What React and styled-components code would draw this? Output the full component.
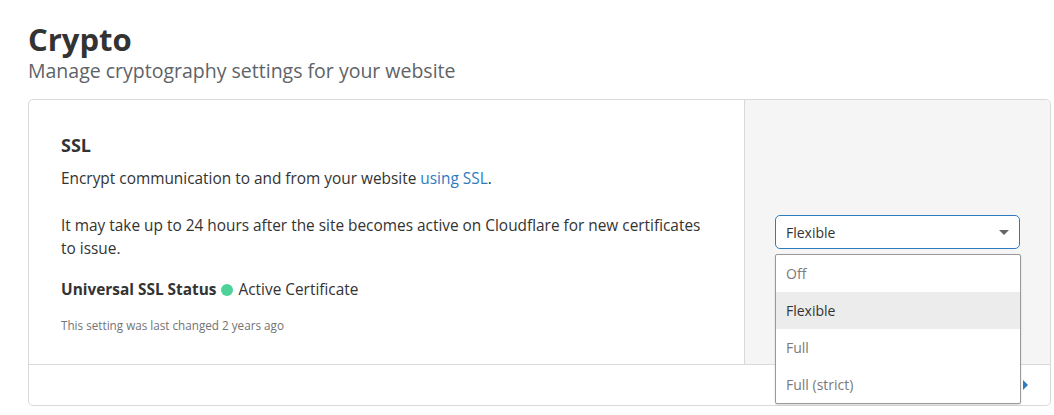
import styled, { createGlobalStyle } from "styled-components";

const GlobalStyle = createGlobalStyle`
  body {
    margin: 0;
    background: #fff;
    font-family: "Open Sans", "Noto Sans", sans-serif;
    color: #333;
  }
`;

const options = ["Off", "Flexible", "Full", "Full (strict)"];

export default function App() {
  const selected = "Flexible";

  return (
    <>
      <GlobalStyle />
      <Page>
        <PageTitle>Crypto</PageTitle>
        <PageSubtitle>Manage cryptography settings for your website</PageSubtitle>
        <Card>
          <CardBody>
            <Main>
              <SectionTitle>SSL</SectionTitle>
              <Text>
                Encrypt communication to and from your website <Link href="#">using SSL</Link>.
              </Text>
              <Text $gap={24}>
                It may take up to 24 hours after the site becomes active on Cloudflare for new
                certificates to issue.
              </Text>
              <Status>
                <strong>Universal SSL Status</strong>
                <Dot />
                Active Certificate
              </Status>
              <Meta>This setting was last changed 2 years ago</Meta>
            </Main>
            <Aside>
              <SelectWrap>
                <Select>
                  {selected}
                  <Caret />
                </Select>
                <Menu>
                  {options.map((o) => (
                    <MenuItem key={o} $active={o === selected}>
                      {o}
                    </MenuItem>
                  ))}
                </Menu>
              </SelectWrap>
            </Aside>
          </CardBody>
          <Footer>
            <FooterArrow />
          </Footer>
        </Card>
      </Page>
    </>
  );
}

const Page = styled.div`
  padding: 20px 3px 0 28px;
`;

const PageTitle = styled.h1`
  margin: 0;
  font-size: 31px;
  line-height: 38px;
  font-weight: 700;
  color: #333;
`;

const PageSubtitle = styled.p`
  margin: 0;
  font-size: 19.5px;
  line-height: 26px;
  color: #5e6368;
`;

const Card = styled.div`
  margin-top: 15px;
  border: 1px solid #d9d9d9;
  border-radius: 5px;
  background: #fff;
`;

const CardBody = styled.div`
  display: flex;
  border-bottom: 1px solid #d9d9d9;
`;

const Main = styled.div`
  flex: 1;
  padding: 33px 32px 30px;
`;

const SectionTitle = styled.h3`
  margin: 0;
  font-size: 18px;
  line-height: 24px;
  font-weight: 700;
  color: #333;
`;

const Text = styled.p`
  margin: ${(p) => p.$gap || 10}px 0 0;
  font-size: 15.4px;
  line-height: 23px;
  color: #333;
`;

const Link = styled.a`
  color: #2f7bbf;
  text-decoration: none;
`;

const Status = styled.div`
  display: flex;
  align-items: center;
  gap: 5px;
  margin-top: 18px;
  font-size: 15.4px;
  line-height: 23px;

  strong {
    font-weight: 700;
  }
`;

const Dot = styled.span`
  width: 12px;
  height: 12px;
  border-radius: 50%;
  background: #4fd19a;
`;

const Meta = styled.div`
  margin-top: 15px;
  font-size: 11.7px;
  line-height: 18px;
  color: #737373;
`;

const Aside = styled.div`
  width: 245px;
  padding: 0 30px;
  background: #f5f5f5;
  border-left: 1px solid #d9d9d9;
  border-top-right-radius: 5px;
  display: flex;
  align-items: center;
`;

const SelectWrap = styled.div`
  position: relative;
  width: 100%;
`;

const Select = styled.div`
  display: flex;
  align-items: center;
  justify-content: space-between;
  height: 34px;
  padding: 0 10px;
  background: #fff;
  border: 1px solid #2f7bbf;
  border-radius: 5px;
  font-size: 14px;
  color: #333;
  box-sizing: border-box;
`;

const Caret = styled.span`
  width: 0;
  height: 0;
  border-left: 5px solid transparent;
  border-right: 5px solid transparent;
  border-top: 5px solid #666;
`;

const Menu = styled.div`
  position: absolute;
  top: 39px;
  left: 0;
  right: -1px;
  background: #fff;
  border: 1px solid #999;
  border-radius: 2px;
  box-shadow: 0 1px 2px rgba(0, 0, 0, 0.15);
  z-index: 2;
`;

const MenuItem = styled.div`
  height: 37px;
  display: flex;
  align-items: center;
  padding: 0 10px;
  font-size: 14px;
  color: ${(p) => (p.$active ? "#333" : "#7a7a7a")};
  background: ${(p) => (p.$active ? "#ebeceb" : "transparent")};
`;

const Footer = styled.div`
  height: 40px;
  display: flex;
  align-items: center;
  justify-content: flex-end;
  padding-right: 22px;
`;

const FooterArrow = styled.span`
  width: 0;
  height: 0;
  border-top: 5px solid transparent;
  border-bottom: 5px solid transparent;
  border-left: 5px solid #2f7bbf;
`;
